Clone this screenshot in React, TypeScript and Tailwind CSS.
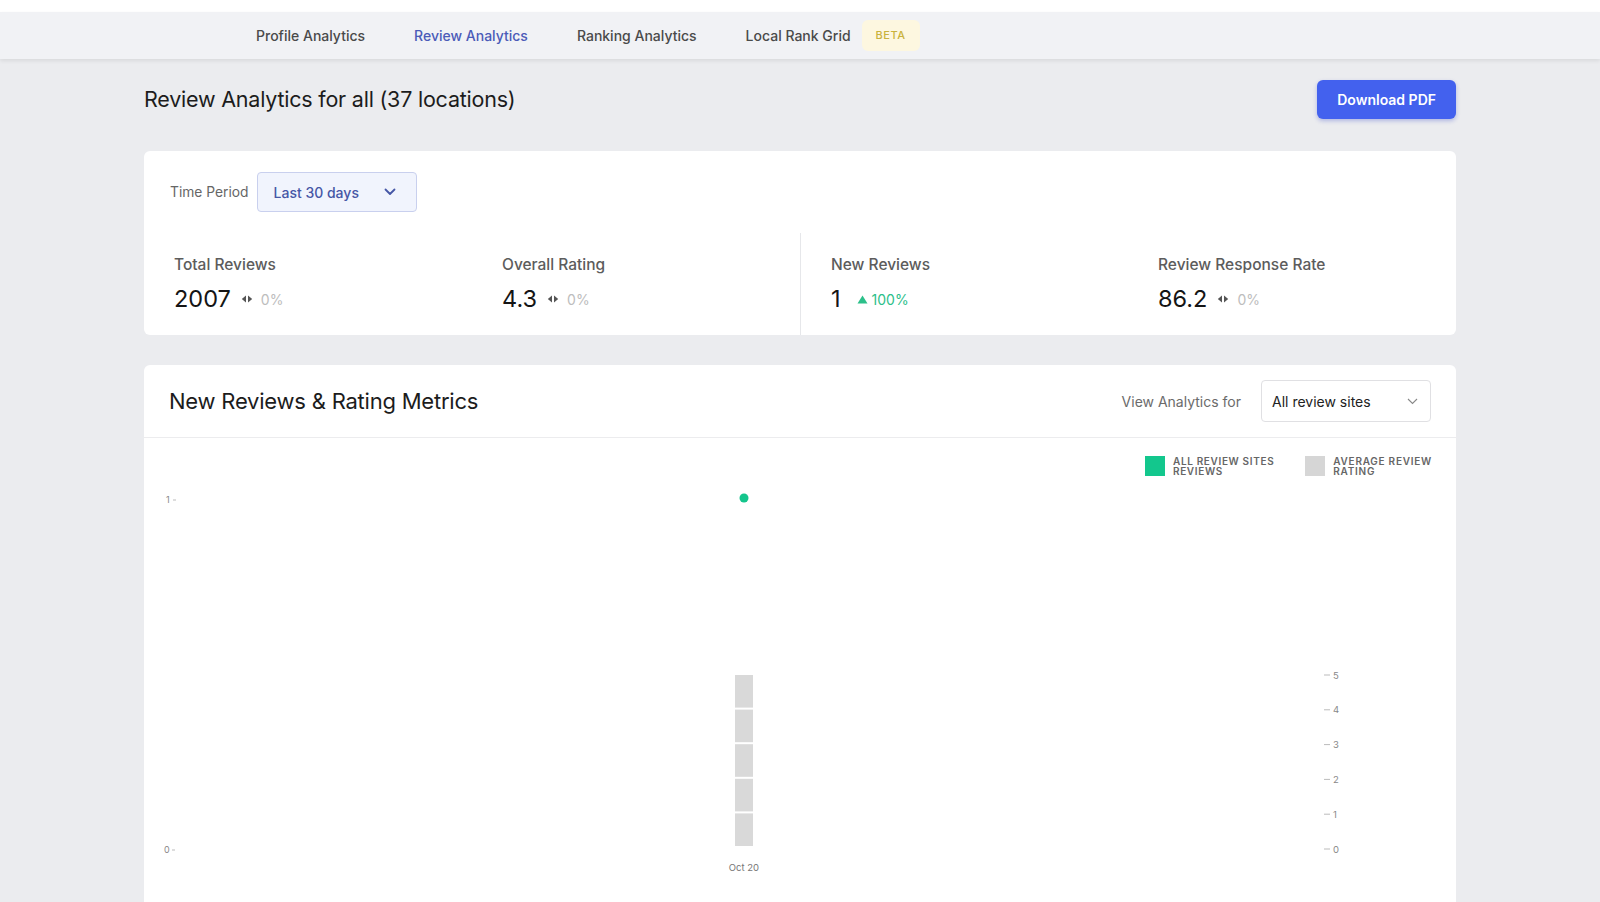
import React from "react";

function Arrows() {
  return (
    <svg width="12" height="8" viewBox="0 0 12 8" className="ml-[6px] mr-[8px]">
      <path d="M5 0.5 L0.8 4 L5 7.5 Z" fill="#555" />
      <path d="M7 0.5 L11.2 4 L7 7.5 Z" fill="#555" />
    </svg>
  );
}

function Stat({ label, value, change, up, border }: { label: string; value: string; change: string; up?: boolean; border?: boolean }) {
  return (
    <div className={"pl-[30px] pt-[22px] pb-[22px] " + (border ? "border-l border-[#e6e7ea]" : "")}>
      <div className="text-[15.5px] font-medium text-[#5c5c5c] leading-[20px]">{label}</div>
      <div className="flex items-center mt-[10px]">
        <span className="text-[23.5px] text-[#151515] leading-[28px]">{value}</span>
        {up ? (
          <span className="flex items-center ml-[16px] text-[14px] text-[#2cc08a]">
            <svg width="11" height="9" viewBox="0 0 11 9" className="mr-[4px]">
              <path d="M5.5 0.5 L10.5 8.5 L0.5 8.5 Z" fill="#2cc08a" />
            </svg>
            100%
          </span>
        ) : (
          <span className="flex items-center ml-[4px] text-[14px] text-[#bdbdbd]">
            <Arrows />
            {change}
          </span>
        )}
      </div>
    </div>
  );
}

function Chart() {
  const segs = [0, 1, 2, 3, 4];
  const right = [5, 4, 3, 2, 1, 0];
  return (
    <svg width="1312" height="450" viewBox="0 0 1312 450" className="block">
      <text x="22" y="27" fontSize="9" fill="#888" fontFamily="Inter, sans-serif">1</text>
      <line x1="29" y1="24" x2="32" y2="24" stroke="#bbb" strokeWidth="1" />
      <text x="20" y="377" fontSize="9" fill="#888" fontFamily="Inter, sans-serif">0</text>
      <line x1="28" y1="374" x2="31" y2="374" stroke="#bbb" strokeWidth="1" />
      <circle cx="600" cy="22" r="4.5" fill="#14c58c" />
      {segs.map((i) => (
        <rect key={i} x="591" y={199 + i * 34.6} width="18" height="32.6" fill="#d9d9d9" />
      ))}
      {right.map((v, i) => (
        <g key={v}>
          <line x1="1180" y1={199 + i * 34.8} x2="1186" y2={199 + i * 34.8} stroke="#bbb" strokeWidth="1" />
          <text x="1189" y={202.5 + i * 34.8} fontSize="9.5" fill="#888" fontFamily="Inter, sans-serif">{v}</text>
        </g>
      ))}
      <text x="600" y="395" fontSize="9.5" fill="#777" textAnchor="middle" fontFamily="Inter, sans-serif">Oct 20</text>
    </svg>
  );
}

export default function App() {
  return (
    <div className="min-h-[902px] bg-[#ebecef] overflow-hidden" style={{ fontFamily: "Inter, 'Noto Sans', sans-serif" }}>
      <div className="h-[12px] bg-white" />
      <div className="h-[47px] bg-[#f1f2f5] shadow-[0_2px_4px_rgba(0,0,0,0.08)] flex items-center pl-[256px] text-[14px] font-medium text-[#4a4a4a]">
        <span>Profile Analytics</span>
        <span className="ml-[49px] text-[#4b5bb8]">Review Analytics</span>
        <span className="ml-[49px]">Ranking Analytics</span>
        <span className="ml-[49px]">Local Rank Grid</span>
        <span className="ml-[11px] h-[31px] px-[14px] flex items-center rounded-md bg-[#fdf7e0] text-[11px] tracking-[0.05em] text-[#c9b23c]">BETA</span>
      </div>

      <div className="w-[1312px] mx-auto">
        <div className="flex items-center justify-between mt-[21px] h-[39px]">
          <h1 className="text-[21.5px] font-normal text-[#1c1c1c] tracking-[-0.01em]">Review Analytics for all (37 locations)</h1>
          <button className="h-[39px] px-[20px] rounded-md bg-[#4361ee] text-white text-[14px] font-semibold shadow-[0_2px_4px_rgba(40,60,200,0.3)]">
            Download PDF
          </button>
        </div>

        <div className="mt-[32px] bg-white rounded-md">
          <div className="flex items-center pt-[21px] pl-[26px]">
            <span className="text-[13.8px] text-[#666]">Time Period</span>
            <div className="ml-[8px] w-[160px] h-[40px] rounded-[4px] border border-[#c9d0ee] bg-[#f1f4fd] flex items-center justify-between pl-[16px] pr-[20px]">
              <span className="text-[14px] font-medium text-[#4657a6]">Last 30 days</span>
              <svg width="12" height="8" viewBox="0 0 12 8">
                <path d="M1.5 1.5 L6 6 L10.5 1.5" fill="none" stroke="#4657a6" strokeWidth="1.8" strokeLinecap="round" strokeLinejoin="round" />
              </svg>
            </div>
          </div>
          <div className="grid grid-cols-4 mt-[21px]">
            <Stat label="Total Reviews" value="2007" change="0%" />
            <Stat label="Overall Rating" value="4.3" change="0%" />
            <Stat label="New Reviews" value="1" change="100%" up border />
            <Stat label="Review Response Rate" value="86.2" change="0%" />
          </div>
        </div>

        <div className="mt-[30px] bg-white rounded-t-md">
          <div className="h-[73px] border-b border-[#ececee] flex items-center justify-between pl-[25px] pr-[25px]">
            <h2 className="text-[22px] font-normal text-[#1c1c1c] tracking-[-0.01em]">New Reviews &amp; Rating Metrics</h2>
            <div className="flex items-center">
              <span className="text-[14px] text-[#6b6b6b]">View Analytics for</span>
              <div className="ml-[20px] w-[170px] h-[42px] rounded-[4px] border border-[#e0e0e3] bg-white flex items-center justify-between pl-[10px] pr-[12px]">
                <span className="text-[14px] text-[#222]">All review sites</span>
                <svg width="11" height="7" viewBox="0 0 11 7">
                  <path d="M1 1 L5.5 5.5 L10 1" fill="none" stroke="#888" strokeWidth="1.1" />
                </svg>
              </div>
            </div>
          </div>
          <div className="flex justify-end pt-[18px] pr-[24px] h-[38px]">
            <div className="flex items-start">
              <div className="w-[20px] h-[20px] bg-[#13c78d]" />
              <div className="ml-[8px] text-[10px] font-semibold leading-[10px] tracking-[0.065em] text-[#666]">
                <div>ALL REVIEW SITES</div>
                <div>REVIEWS</div>
              </div>
            </div>
            <div className="flex items-start ml-[31px]">
              <div className="w-[20px] h-[20px] bg-[#d6d6d6]" />
              <div className="ml-[8px] text-[10px] font-semibold leading-[10px] tracking-[0.075em] text-[#666]">
                <div>AVERAGE REVIEW</div>
                <div>RATING</div>
              </div>
            </div>
          </div>
          <Chart />
        </div>
      </div>
    </div>
  );
}
